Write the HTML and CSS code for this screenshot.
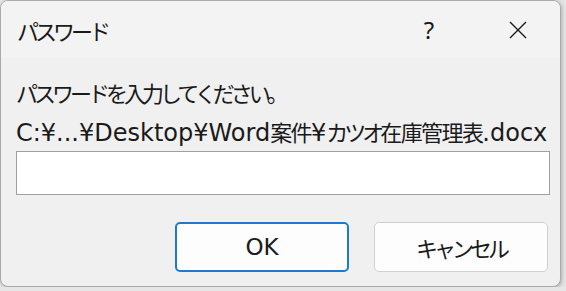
FILE: index.html
```html
<!DOCTYPE html>
<html lang="ja">
<head>
    <meta charset="UTF-8">
    <title>パスワード</title>
    <link rel="stylesheet" href="styles.css">
</head>
<body>
    <div class="dialog">
        <div class="titlebar">
            <span class="title"><span class="kana">パスワード</span></span>
            <span class="help-btn">?</span>
            <span class="close-btn">
                <svg width="18" height="18" viewBox="0 0 18 18">
                    <path d="M1 1 L17 17 M17 1 L1 17" stroke="#1a1a1a" stroke-width="1.4" fill="none"/>
                </svg>
            </span>
        </div>
        <div class="content">
            <p class="label"><span class="kana">パスワードを入力してください。</span></p>
            <p class="label">C:¥...¥Desktop¥Word<span class="kanji">案件</span>¥<span class="kana">カツオ</span><span class="kanji">在庫管理表</span>.docx</p>
            <input class="password-box" type="password">
            <div class="buttons">
                <button class="btn btn-default">OK</button>
                <button class="btn"><span class="kana">キャンセル</span></button>
            </div>
        </div>
    </div>
</body>
</html>
```

FILE: styles.css
```css
body {
    margin: 0;
    background-color: #e6e6e6;
    font-family: "DejaVu Sans", "Noto Sans CJK JP", sans-serif;
    color: #1a1a1a;
}
.dialog {
    width: 559px;
    height: 285px;
    border: 1px solid #a9a9a9;
    border-radius: 8px;
    background-color: #f0f0f0;
    overflow: hidden;
    box-shadow: 1px 1px 4px rgba(0, 0, 0, 0.25);
}
/* 日本語は幅を詰めて表示 */
.kana {
    font-family: "Noto Sans CJK JP", sans-serif;
    font-size: 22px;
    letter-spacing: -4px;
}
.kanji {
    font-family: "Noto Sans CJK JP", sans-serif;
    font-size: 22px;
    letter-spacing: -1.6px;
}
.titlebar {
    display: flex;
    align-items: center;
    height: 57px;
    background-color: #f3f3f3;
}
.title {
    flex: 1;
    padding-left: 16px;
}
.help-btn {
    font-family: "Noto Sans", sans-serif;
    font-size: 24px;
    width: 20px;
    text-align: center;
    margin-right: 70px;
}
.close-btn {
    display: flex;
    margin-right: 33px;
}
.content {
    padding: 15px 10px 0 15px;
}
.label {
    margin: 0;
    height: 39px;
    line-height: 39px;
    font-size: 24px;
    white-space: nowrap;
}
.password-box {
    display: block;
    box-sizing: border-box;
    width: 534px;
    height: 44px;
    margin: 0;
    border: 1px solid #a0a0a0;
    background-color: white;
}
.buttons {
    display: flex;
    justify-content: flex-end;
    gap: 25px;
    margin-top: 27px;
    padding-right: 2px;
}
.btn {
    box-sizing: border-box;
    width: 174px;
    height: 50px;
    border: 1px solid #d0d0d0;
    border-radius: 5px;
    background-color: #fdfdfd;
    font-family: "DejaVu Sans", "Noto Sans CJK JP", sans-serif;
    font-size: 23px;
    color: #1a1a1a;
}
.btn-default {
    border: 2px solid #1f79d2;
}
```
